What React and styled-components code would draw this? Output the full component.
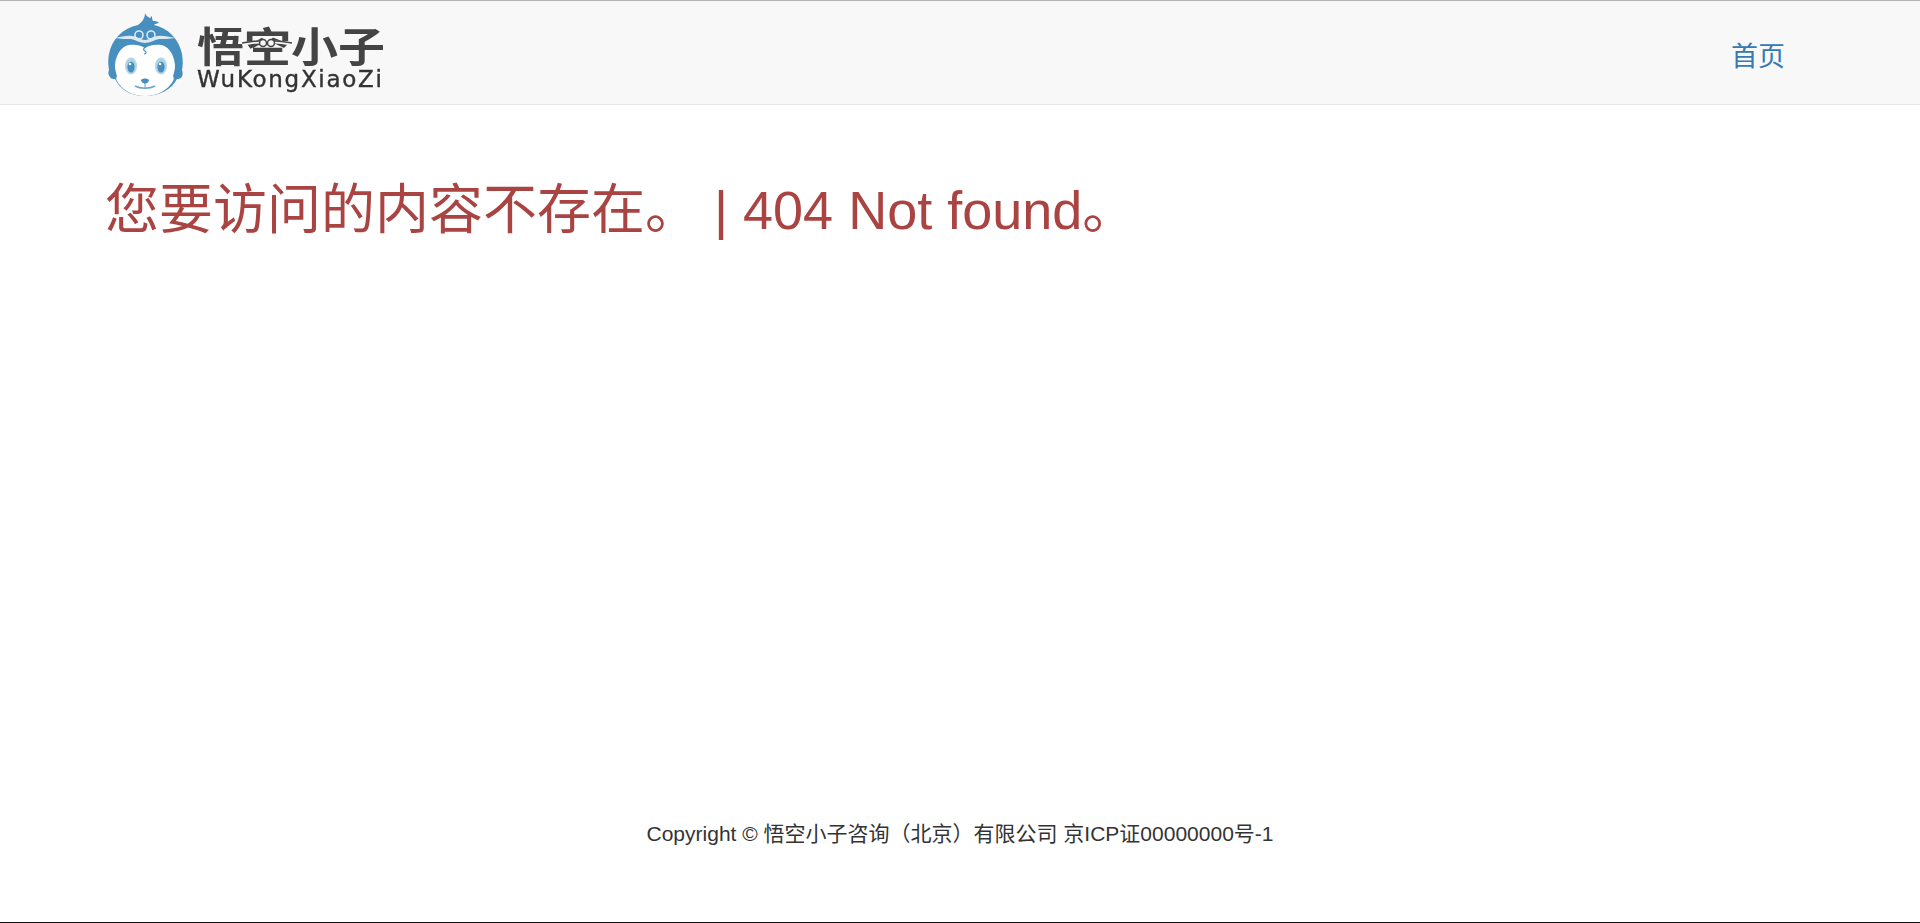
import React from "react";
import styled, { createGlobalStyle } from "styled-components";

const Global = createGlobalStyle`
  html, body { margin: 0; padding: 0; height: 100%; background: #fff; }
  body { font-family: "Liberation Sans", "Noto Sans CJK SC", sans-serif; color: #333; }
  #root { height: 100%; }
`;
const Page = styled.div`
  height: 923px; box-sizing: border-box; display: flex; flex-direction: column;
  border-bottom: 1px solid #111; overflow: hidden;
`;
const Navbar = styled.header`
  height: 105px; box-sizing: border-box; flex: none;
  display: flex; align-items: center; justify-content: space-between;
  padding: 0 135px 0 105px; background: #f8f8f8;
  border-top: 1px solid #b4b4b4; border-bottom: 1px solid #e7e7e7;
`;
const Brand = styled.a`
  display: flex; align-items: flex-start; gap: 14px; height: 84px; margin-top: 5px;
  padding-left: 3px; color: #444; text-decoration: none; filter: blur(0.45px);
`;
const Wordmark = styled.div`
  position: relative; display: flex; flex-direction: column; width: 188px; padding-top: 7px;
`;
const WordCn = styled.span`
  display: block; height: 47px; font-family: "Noto Sans CJK SC", sans-serif; font-weight: 700;
  font-size: 47px; line-height: 47px; white-space: nowrap; color: #444;
  transform: scaleY(0.86); transform-origin: 50% 60%;
`;
const WordEn = styled.span`
  font-family: "DejaVu Sans", sans-serif; font-size: 23px; line-height: 20px; margin-top: 2px;
  letter-spacing: 1.7px; white-space: nowrap; color: #333; -webkit-text-stroke: 0.4px #333;
`;
const Knot = styled.svg`
  position: absolute; left: 45px; top: 24px;
`;
const NavLink = styled.a`
  font-family: "Noto Sans CJK SC", sans-serif; font-size: 27px; line-height: 40px;
  margin-top: 5px; color: #337ab7; text-decoration: none;
`;
const Main = styled.main`
  flex: 1; padding: 69px 105px 0;
`;
const Heading = styled.h1`
  margin: 0; font-weight: 400; font-size: 54px; line-height: 72px; color: #a94442;
  font-family: "Liberation Sans", "Noto Sans CJK SC", sans-serif;
`;
const Footer = styled.footer`
  flex: none; height: 101px; text-align: center; font-size: 21px; line-height: 26px; color: #333;
`;

const Monkey = () => (
  <svg width="75" height="84" viewBox="0 0 75 84">
    <path d="M37 0c1 3 3 4 5 5l2-2c0 2 0 3 1 5 2 0 4 0 6 2-2 0-4 1-5 2 14 3 25 14 28 29 1 6 1 12 0 16 1 3 1 6-1 8-2 1-3 1-4 1-5 10-17 17-32 17S12 76 7 66c-2 0-4 0-5-2-2-2-2-5-1-7C0 51 0 46 1 41 4 26 15 15 30 12c2-2 4-3 5-5 1-2 2-4 2-7z" fill="#468fbe"/>
    <path d="M37 35c3-2 9-4 16-3 8 1 13 10 14 20 0 5-1 8-2 11 1 2 1 3 0 5-5 9-16 15-28 15S14 77 9 68c-1-2-1-3 0-5-1-3-2-6-2-11 1-10 6-19 14-20 7-1 13 1 16 3z" fill="#fff"/>
    <path d="M6 25c8-1 13-3 18-2 5 0 9 4 13 4s8-4 13-4c5-1 10 1 18 2-7 1-12 1-17 1-5 1-9 4-14 4s-9-3-14-4C18 26 13 26 6 25z" fill="#dbe9f3"/>
    <circle cx="31" cy="22" r="4" fill="none" stroke="#dbe9f3" strokeWidth="1.6"/>
    <circle cx="43" cy="22" r="4" fill="none" stroke="#dbe9f3" strokeWidth="1.6"/>
    <path d="M38 34c-3 1-3 3-1 4 2 1 1 3-1 3" fill="none" stroke="#468fbe" strokeWidth="1.2"/>
    <ellipse cx="23" cy="53" rx="6" ry="8.5" fill="#b5d3e6"/>
    <ellipse cx="23" cy="54" rx="3.6" ry="5.5" fill="#468fbe"/>
    <circle cx="22" cy="51" r="1.3" fill="#fff"/>
    <ellipse cx="53" cy="53" rx="6" ry="8.5" fill="#b5d3e6"/>
    <ellipse cx="53" cy="54" rx="3.6" ry="5.5" fill="#468fbe"/>
    <circle cx="52" cy="51" r="1.3" fill="#fff"/>
    <path d="M33 67c2-2 6-2 8 0 0 2-2 3-4 4-2-1-4-2-4-4z" fill="#468fbe"/>
    <path d="M27 73c5 3 15 3 20 0" fill="none" stroke="#6aa6cc" strokeWidth="1.5"/>
    <path d="M37 70v5" stroke="#6aa6cc" strokeWidth="1"/>
  </svg>
);

export default function App() {
  return (
    <Page>
      <Global />
      <Navbar>
        <Brand href="#">
          <Monkey />
          <Wordmark>
            <WordCn>悟空小子</WordCn>
            <Knot width="50" height="12" viewBox="0 0 50 12">
              <path d="M0 7c8-1 12-2 17-2M33 5c5 0 9 1 17 2" stroke="#f8f8f8" strokeWidth="3" fill="none"/>
              <path d="M0 6c8-1 12-2 17-2M33 4c5 0 9 1 17 2" stroke="#444" strokeWidth="1.6" fill="none"/>
              <circle cx="21" cy="6" r="3.5" fill="#f8f8f8" stroke="#444" strokeWidth="1.5"/>
              <circle cx="29" cy="6" r="3.5" fill="#f8f8f8" stroke="#444" strokeWidth="1.5"/>
            </Knot>
            <WordEn>WuKongXiaoZi</WordEn>
          </Wordmark>
        </Brand>
        <NavLink href="#">首页</NavLink>
      </Navbar>
      <Main>
        <Heading>您要访问的内容不存在。 | 404 Not found。</Heading>
      </Main>
      <Footer>Copyright © 悟空小子咨询（北京）有限公司 京ICP证00000000号-1</Footer>
    </Page>
  );
}
